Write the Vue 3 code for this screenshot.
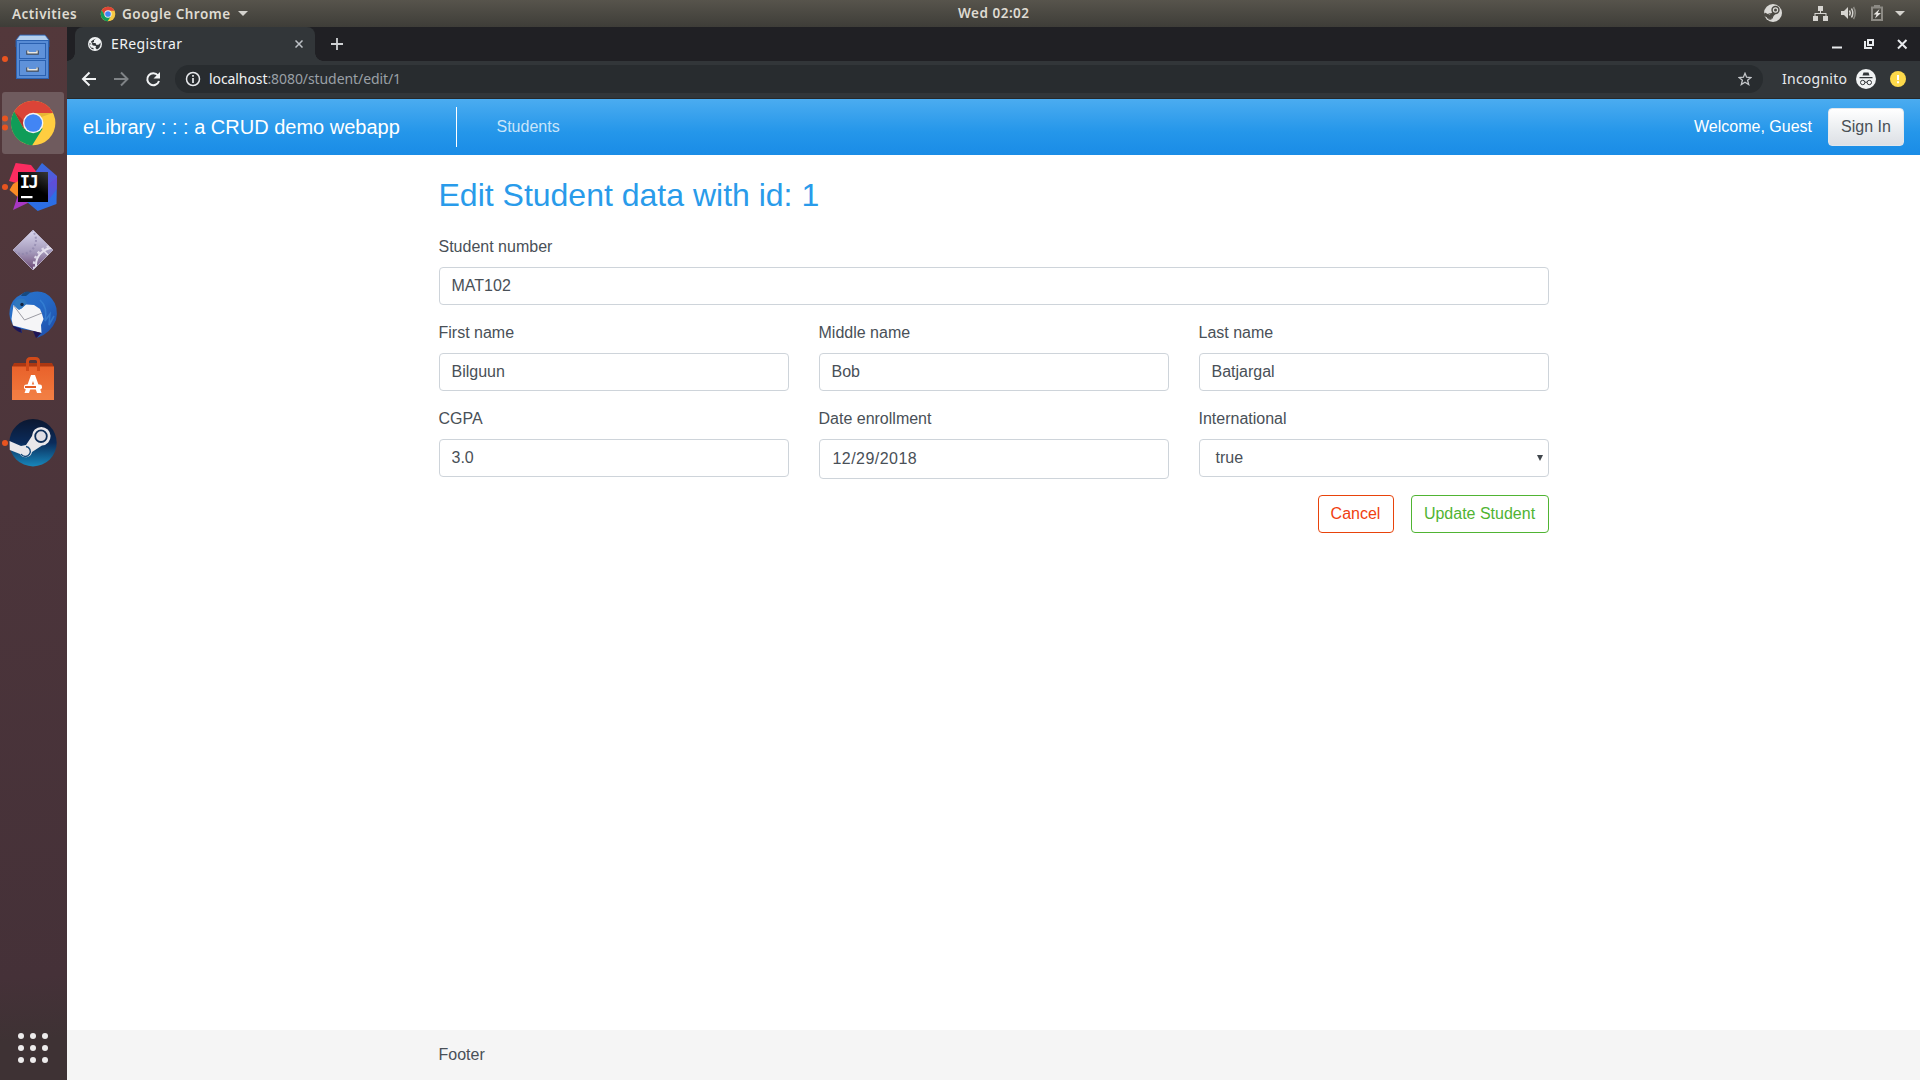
<script setup>
const names = [
  { label: 'First name', value: 'Bilguun' },
  { label: 'Middle name', value: 'Bob' },
  { label: 'Last name', value: 'Batjargal' },
]
</script>

<template>
  <div class="desktop">
    <header class="topbar">
      <span class="activities">Activities</span>
      <svg class="mini-chrome" width="16" height="16" viewBox="-24 -24 48 48">
        <circle r="22" fill="#f6c945" />
        <path d="M-19 -11A22 22 0 0 1 19.700 -10H0L-10 5Z" fill="#dd4436" />
        <path d="M-19 -11A22 22 0 0 0 -1 22L9 6L-9 6Z" fill="#129c58" />
        <circle r="11" fill="#f3f3f3" />
        <circle r="8.500" fill="#4285f4" />
      </svg>
      <span class="appname">Google Chrome</span>
      <svg class="caret" width="10" height="5"><path d="M0 0H10L5 5Z" fill="#d4d2cd" /></svg>
      <span class="clock">Wed 02:02</span>
      <svg class="tray" width="156" height="27" viewBox="1760 0 156 27">
        <circle cx="1773" cy="13" r="9" fill="#dad9d6" />
        <path d="M1764 14L1770 17L1776 11" stroke="#4b4943" stroke-width="3.6" fill="none" />
        <circle cx="1775.5" cy="10" r="4.2" fill="#4b4943" />
        <circle cx="1775.5" cy="10" r="2.1" fill="none" stroke="#dad9d6" stroke-width="1.2" />
        <circle cx="1770" cy="16.5" r="2.8" fill="none" stroke="#4b4943" stroke-width="1" />
        <g fill="#d6d4d0">
          <path d="M1818 6h5v5h-5zM1813 16h5v5h-5zM1823 16h5v5h-5zM1820 11h1v2h5.500v3h-1v-2h-10v2h-1v-3h5.500z" />
          <path d="M1841 11h3l4-4v12l-4-4h-3z" />
        </g>
        <path d="M1849.500 10.500Q1851 13 1849.500 15.500" fill="none" stroke="#d6d4d0" stroke-width="1.500" />
        <path d="M1851.500 8.500Q1854 13 1851.500 17.500" fill="none" stroke="#d6d4d0" stroke-width="1.500" />
        <path d="M1853.500 7Q1857 13 1853.500 19" fill="none" stroke="#8c8a84" stroke-width="1.500" />
        <path d="M1872 7.500H1882V20H1872Z" fill="none" stroke="#8c8a84" stroke-width="2" />
        <path d="M1874 5h6v2h-6z" fill="#8c8a84" />
        <path d="M1879.500 9L1873.500 14.500H1876.500L1875 18.500L1881 13H1877.800Z" fill="#e4e2de" />
        <path d="M1895 11H1905L1900 16Z" fill="#d4d2cd" />
      </svg>
    </header>

    <div class="workspace">
      <aside class="dock">
        <div class="app">
          <svg width="67" height="64" viewBox="0 0 67 64">
            <circle cx="5" cy="32" r="3" fill="#e95420" />
            <path d="M16 13L20 8H45L49 13V20H16Z" fill="#92b6e2" stroke="#2f63b0" stroke-width=".8" />
            <path d="M20 9H45L48 13H17Z" fill="#b5d0ee" />
            <rect x="16.500" y="13.500" width="32" height="38" fill="#578bd4" stroke="#2d64b3" />
            <rect x="19.500" y="16.500" width="26" height="15" fill="#5f92da" stroke="#2b61b0" />
            <rect x="19.500" y="33.500" width="26" height="15" fill="#5f92da" stroke="#2b61b0" />
            <path d="M27.500 23.500v3h10v-3M27.500 40.500v3h10v-3" fill="none" stroke="#444c58" stroke-width="2.600" />
            <path d="M28 23.500v2.200h9v-2.200M28 40.500v2.200h9v-2.200" fill="none" stroke="#e9e9e4" stroke-width="1.400" />
          </svg>
        </div>
        <div class="app active">
          <svg width="67" height="64" viewBox="0 0 67 64">
            <rect x="2" y="1" width="62" height="62" rx="3" fill="#6f5b5e" />
            <circle cx="5" cy="27.600" r="3" fill="#e95420" />
            <circle cx="5" cy="36.400" r="3" fill="#e95420" />
            <g transform="translate(33.200 32)">
              <circle r="22.200" fill="#ffcd40" />
              <path d="M-19 -11.500A22.200 22.200 0 0 1 19.800 -10H0L-9.500 5.500Z" fill="#db4437" />
              <path d="M-19 -11.500A22.200 22.200 0 0 0 -1 22.200L9.500 5.500L-9.500 5.500Z" fill="#0f9d58" />
              <path d="M0 -10H19.800L8 -6Z" fill="#d9a52e" opacity=".6" />
              <path d="M-19 -11.500L-9.500 5.500L-9 -2Z" fill="#a52e24" opacity=".7" />
              <circle r="10.200" fill="#f4f4f4" />
              <circle r="8.800" fill="#4285f4" />
            </g>
          </svg>
        </div>
        <div class="app">
          <svg width="67" height="64" viewBox="0 0 67 64">
            <defs>
              <linearGradient id="ijb" x1="0" y1="0" x2="0" y2="1">
                <stop offset="0" stop-color="#2f6fe0" /><stop offset=".35" stop-color="#5a55dc" /><stop offset=".6" stop-color="#2f6de6" /><stop offset="1" stop-color="#2a6fe4" />
              </linearGradient>
              <linearGradient id="ijk" x1="1" y1="0" x2=".4" y2="1">
                <stop offset="0" stop-color="#383838" /><stop offset=".6" stop-color="#000" /><stop offset="1" stop-color="#000" />
              </linearGradient>
            </defs>
            <circle cx="5" cy="32" r="3" fill="#e95420" />
            <path d="M15.700 8L31 10L39 20L20 29L9 26Z" fill="#fb2c60" />
            <path d="M13 29L20 25V44L9.500 35Z" fill="#f98b25" />
            <path d="M18 40L13 55L32 46Z" fill="#a838c4" />
            <path d="M42 8L57 21L56.500 49L37.700 56L27 47L36 16Z" fill="url(#ijb)" />
            <path d="M47 30L57 23V34L47 47Z" fill="#6c42d2" opacity=".5" />
            <rect x="18" y="17" width="30" height="30" fill="url(#ijk)" />
            <text x="19.800" y="33" class="ij">IJ</text>
            <rect x="21" y="41" width="11.500" height="2.200" fill="#fff" />
          </svg>
        </div>
        <div class="app">
          <svg width="67" height="64" viewBox="0 0 67 64">
            <defs>
              <linearGradient id="dia" x1="0" y1="0" x2="0" y2="1">
                <stop offset="0" stop-color="#d9d6ee" /><stop offset=".55" stop-color="#a49abb" /><stop offset="1" stop-color="#6d4974" />
              </linearGradient>
              <clipPath id="diac"><path d="M33 11L53 31L33 51L13 31Z" /></clipPath>
            </defs>
            <path d="M33 11L53 31L33 51L13 31Z" fill="url(#dia)" stroke="#c9c3da" stroke-width=".7" />
            <g clip-path="url(#diac)" fill="none">
              <circle cx="22" cy="21" r="14" stroke="#8d85ab" stroke-width="2" stroke-dasharray="2 2" opacity=".7" />
              <circle cx="53" cy="46" r="17" stroke="#e5e1ee" stroke-width="2" />
              <circle cx="53" cy="46" r="19" stroke="#ddd8e8" stroke-width="2.500" stroke-dasharray="2.500 3" />
              <path d="M43 31L50 38" stroke="#e5e1ee" stroke-width="1.500" />
            </g>
          </svg>
        </div>
        <div class="app">
          <svg width="67" height="64" viewBox="0 0 67 64">
            <defs>
              <linearGradient id="tb" x1="0" y1="0" x2="1" y2="1">
                <stop offset="0" stop-color="#2a74c8" /><stop offset=".5" stop-color="#2569c6" /><stop offset="1" stop-color="#1d4aa4" />
              </linearGradient>
            </defs>
            <path d="M22 11Q25 8 31 9.500Q44 6 52 16Q59 24 56 37Q51 50 37 55L41 49L21 46L22 50Q13 46 10 35Q8 26 13 18Q17 13 22 11Z" fill="url(#tb)" />
            <path d="M13.500 22L19 27L22 25L26 21.500L34 22L40 26L42 31L43.500 36L41 42L41.500 50L13 42.500L11.500 36Z" fill="#f5f5f7" />
            <path d="M14 23L24.500 37L42 30" fill="none" stroke="#9b9ba3" stroke-width="1" />
            <path d="M12 42.500L21 45.500L22 50Q15 48 12 42.500ZM33 48L41.500 50L36 55Z" fill="#1d1558" />
            <path d="M40 17Q48 24 45 38L50 31L49 42L54 33" fill="none" stroke="#3c8ad8" stroke-width="1.600" opacity=".6" />
            <path d="M14 21Q17 14 24 16L27 20L21 26L18 26Z" fill="#3078bd" />
            <circle cx="22" cy="21.500" r="1.700" fill="#13233f" />
            <path d="M21 13Q24 7 31 9L26 13Z" fill="#174a80" />
          </svg>
        </div>
        <div class="app">
          <svg width="67" height="64" viewBox="0 0 67 64">
            <defs>
              <linearGradient id="bag" x1="0" y1="0" x2="0" y2="1">
                <stop offset="0" stop-color="#e9622b" /><stop offset="1" stop-color="#f07a3e" />
              </linearGradient>
            </defs>
            <path d="M12 20L14 16H52L54 20Z" fill="#ac3712" />
            <rect x="12" y="19.500" width="42" height="33.500" fill="url(#bag)" />
            <path d="M12 43H54V53H12Z" fill="#f58a50" opacity=".35" />
            <path d="M27.500 24V14.500Q27.500 11.500 30.500 11.500H35.500Q38.500 11.500 38.500 14.500V24" fill="none" stroke="#d14a19" stroke-width="3" />
            <path d="M24.500 46L31 28H35L41.500 46H37L33 34L29 46Z" fill="#fff" />
            <rect x="24" y="37.500" width="18" height="5" rx="2.200" fill="#fff" />
            <rect x="25" y="39" width="11" height="2" fill="#e45c24" />
          </svg>
        </div>
        <div class="app">
          <svg width="67" height="64" viewBox="0 0 67 64">
            <defs>
              <linearGradient id="stm" x1="0" y1="0" x2="0" y2="1">
                <stop offset="0" stop-color="#0b1730" /><stop offset=".5" stop-color="#0b2b5a" /><stop offset="1" stop-color="#1787bb" />
              </linearGradient>
            </defs>
            <circle cx="5" cy="32" r="3" fill="#e95420" />
            <circle cx="33" cy="31.700" r="23.700" fill="url(#stm)" />
            <path d="M9.500 30L21 35L26 34L32 25A9.300 9.300 0 1 1 42 34.500L32 41A6.500 6.500 0 0 1 20 43L9.800 39Z" fill="#e9e7ea" />
            <circle cx="41" cy="25.200" r="5.800" fill="#e0dee4" stroke="#0d2d58" stroke-width="1.800" />
            <path d="M21 43A5 5 0 1 0 26 35.500" fill="none" stroke="#15497a" stroke-width="1.400" />
          </svg>
        </div>
        <svg class="grid" width="30" height="30" fill="#eeecec">
          <template v-for="r in 3" :key="r">
            <circle v-for="c in 3" :key="c" :cx="c * 12 - 9" :cy="r * 12 - 9" r="3" />
          </template>
        </svg>
      </aside>

      <section class="browser">
        <div class="tabs">
          <div class="tab">
            <svg width="14" height="14" viewBox="0 0 14 14">
              <circle cx="7" cy="7" r="7" fill="#f1f3f4" />
              <path d="M8 1.500L6 3.200V5L4 6H7.500L8.500 8L11 7.500L12.500 5.500V8Q12 11 9 12.500L7.500 11L8 9L5 8.500L1.500 5.800Q1 8 3 10.500L5.500 11V12.500L3.500 11.800Q1.500 10 1.200 7L4.500 7.500L3 4.500L5 3Z" fill="#323639" />
            </svg>
            <span class="tabtitle">ERegistrar</span>
            <svg class="tabclose" width="8" height="8"><path d="M.5 .5L7.500 7.500M7.500 .5L.5 7.500" stroke="#bdc1c6" stroke-width="1.500" /></svg>
          </div>
          <svg class="plus" width="12" height="12"><path d="M6 0V12M0 6H12" stroke="#cfd1d4" stroke-width="1.800" /></svg>
          <svg class="wm" width="76" height="12" viewBox="0 0 76 12">
            <path d="M0 9.500H10" stroke="#e8eaed" stroke-width="2" />
            <path d="M36 2h5v5h-5z M33 3v7h7" fill="none" stroke="#e8eaed" stroke-width="2" />
            <path d="M66 2L74.500 10.500M74.500 2L66 10.500" stroke="#e8eaed" stroke-width="2" />
          </svg>
        </div>
        <div class="toolbar">
          <svg class="navs" width="80" height="16" viewBox="0 0 80 16" fill="none" stroke-width="2">
            <path d="M15 8H2.500M8.500 1.500L2 8L8.500 14.500" stroke="#f1f3f4" />
            <path d="M33 8H45.500M40 1.500L46.500 8L40 14.500" stroke="#7f8386" />
            <path d="M77 4.500A6 6 0 1 0 78 10" stroke="#f1f3f4" />
            <path d="M79 1V7.500H72.500Z" fill="#f1f3f4" stroke="none" />
          </svg>
          <div class="omni">
            <svg width="16" height="16" viewBox="0 0 16 16">
              <circle cx="8" cy="8" r="6.500" fill="none" stroke="#e8eaed" stroke-width="1.500" />
              <path d="M8 7V12M8 4V5.700" stroke="#e8eaed" stroke-width="1.700" />
            </svg>
            <span class="url"><b>localhost</b>:8080/student/edit/1</span>
            <svg class="star" width="14" height="14" viewBox="0 0 14 14">
              <path d="M7 1.300L8.600 5.200L12.900 5.500L9.600 8.200L10.700 12.500L7 10.200L3.300 12.500L4.400 8.200L1.100 5.500L5.400 5.200Z" fill="none" stroke="#c4c7ca" stroke-width="1.300" />
            </svg>
          </div>
          <span class="incog">Incognito</span>
          <svg class="spy" width="20" height="20" viewBox="0 0 20 20">
            <circle cx="10" cy="10" r="10" fill="#f1f3f4" />
            <path d="M6.500 6.500L7.500 3.500H12.500L13.500 6.500ZM3.500 8H16.500V9.200H3.500Z" fill="#323639" />
            <circle cx="6.700" cy="13.500" r="2.200" fill="none" stroke="#323639" />
            <circle cx="13.300" cy="13.500" r="2.200" fill="none" stroke="#323639" />
            <path d="M8.900 13.200H11.100" stroke="#323639" />
          </svg>
          <svg class="warn" width="16" height="16">
            <circle cx="8" cy="8" r="8" fill="#fdd94b" />
            <path d="M7 4h2v5h-2zM7 10.200h2v2h-2z" fill="#fff" />
          </svg>
        </div>

        <nav class="navbar">
          <span class="brand">eLibrary : : : a CRUD demo webapp</span>
          <i class="divider"></i>
          <a class="navlink">Students</a>
          <span class="welcome">Welcome, Guest</span>
          <button class="signin">Sign In</button>
        </nav>

        <main class="page">
          <h2>Edit Student data with id: 1</h2>
          <div class="field">
            <label>Student number</label>
            <input value="MAT102" />
          </div>
          <div class="row">
            <div v-for="n in names" :key="n.label" class="field">
              <label>{{ n.label }}</label>
              <input :value="n.value" />
            </div>
          </div>
          <div class="row">
            <div class="field">
              <label>CGPA</label>
              <input value="3.0" />
            </div>
            <div class="field">
              <label>Date enrollment</label>
              <input class="date" value="12/29/2018" />
            </div>
            <div class="field">
              <label>International</label>
              <div class="select">
                <span>true</span>
                <svg width="6" height="6"><path d="M0 0H6L3 6Z" fill="#40464c" /></svg>
              </div>
            </div>
          </div>
          <div class="actions">
            <button class="cancel">Cancel</button>
            <button class="update">Update Student</button>
          </div>
        </main>
        <footer class="foot"><div>Footer</div></footer>
      </section>
    </div>
  </div>
</template>

<style>
body { margin: 0; overflow: hidden; }
</style>

<style scoped>
* { box-sizing: border-box; }
svg { display: block; flex: none; }
.desktop { width: 1920px; height: 1080px; display: flex; flex-direction: column; font-family: "Liberation Sans", Arial, sans-serif; font-size: 16px; line-height: 24px; color: #495057; background: #fff; }
.desktop span, .desktop a { white-space: nowrap; }

.topbar { position: relative; height: 27px; flex: none; display: flex; align-items: center; background: linear-gradient(#57544c, #3e3d38); color: #dfdbd2; font: 600 13.500px/26px "Noto Sans", sans-serif; letter-spacing: .5px; }
.activities { width: 68px; margin-left: 12px; }
.mini-chrome { margin-left: 20px; }
.appname { width: 111px; margin-left: 6px; }
.caret { margin-left: 5px; }
.clock { position: absolute; left: 958px; top: 0; }
.tray { margin-left: auto; margin-right: 4px; }

.workspace { flex: 1; display: flex; min-height: 0; }
.dock { width: 67px; flex: none; display: flex; flex-direction: column; background: linear-gradient(176deg, #53383b 0%, #4c353b 45%, #453138 90%, #3e3234 96%, #3e3234 100%); }
.app { height: 64px; }
.grid { margin: auto 0 17px 18px; }
.ij { font: bold 17px "DejaVu Sans Mono", monospace; fill: #fff; letter-spacing: -1.500px; }

.browser { flex: 1; display: flex; flex-direction: column; min-width: 0; }
.tabs { height: 34px; flex: none; display: flex; align-items: center; background: #202024; }
.tab { position: relative; width: 240px; height: 34px; margin-left: 8px; padding: 0 12px 0 13px; display: flex; align-items: center; background: #323639; border-radius: 8px 8px 0 0; }
.tab::before, .tab::after { content: ""; position: absolute; bottom: 0; width: 8px; height: 8px; }
.tab::before { left: -8px; background: radial-gradient(circle at 0 0, transparent 7.500px, #323639 8px); }
.tab::after { right: -8px; background: radial-gradient(circle at 100% 0, transparent 7.500px, #323639 8px); }
.tabtitle { margin-left: 9px; font: 14px/20px "Noto Sans", sans-serif; letter-spacing: .4px; color: #f1f3f4; }
.tabclose { margin-left: auto; }
.plus { margin-left: 16px; }
.wm { margin: 0 12px 0 auto; }
.toolbar { height: 38px; flex: none; display: flex; align-items: center; padding-bottom: 1px; background: #323639; border-bottom: 1px solid #26292b; }
.navs { margin-left: 14px; }
.omni { width: 1588px; height: 28px; margin-left: 14px; padding: 0 11px 0 10px; display: flex; align-items: center; border-radius: 14px; background: #282c2f; }
.url { margin-left: 8px; font: 14px/20px "Noto Sans", sans-serif; letter-spacing: -.08px; color: #9aa0a6; }
.url b { font-weight: normal; color: #f1f3f4; }
.star { margin-left: auto; }
.incog { width: 65px; margin-left: 19px; font: 14px/20px "Noto Sans", sans-serif; letter-spacing: .25px; color: #e8eaed; }
.spy { margin-left: 9px; }
.warn { margin-left: 14px; }

.navbar { height: 56px; flex: none; display: flex; align-items: center; padding: 0 16px; background: linear-gradient(#4bacf0, #2496ea 60%, #1a8ce6); color: #fff; }
.brand { width: 358px; font-size: 20px; line-height: 30px; }
.divider { width: 1px; height: 40px; margin-left: 15px; background: #fff; }
.navlink { margin-left: 39.500px; color: #c8e5fa; }
.welcome { margin-left: auto; }
button { height: 38px; padding: 0; border-radius: 4px; font: 16px/24px "Liberation Sans", Arial, sans-serif; white-space: nowrap; }
.signin { width: 76px; margin-left: 16px; border: 1px solid #e2e7ec; background: linear-gradient(#fff, #e9ecef 60%, #dde0e5); color: #495057; }

.page { flex: 1; width: 1140px; margin: 0 auto; padding: 21px 15px 0; }
h2 { margin: 0 0 20.600px; font-size: 32px; line-height: 38.400px; font-weight: normal; color: #299bea; }
.field { flex: 1; margin-bottom: 16px; }
label { display: block; margin-bottom: 8px; }
input, .select { display: block; width: 100%; height: 38px; padding: 0 12px; border: 1px solid #ced4da; border-radius: 4px; background: #fff; color: #495057; font: 16px/24px "Liberation Sans", Arial, sans-serif; outline: none; }
.row { display: flex; gap: 30px; }
input.date { height: 40px; padding-left: 13px; letter-spacing: .45px; }
.select { display: flex; align-items: center; justify-content: space-between; padding: 0 5px 0 16px; }
.actions { display: flex; justify-content: flex-end; gap: 17px; }
.cancel { width: 76px; border: 1px solid #e8430b; background: #fff; color: #f04010; }
.update { width: 138px; border: 1px solid #50b433; background: #fff; color: #50b433; }
.foot { height: 50px; flex: none; background: #f5f5f5; line-height: 49px; }
.foot div { width: 1110px; margin: 0 auto; }
</style>
